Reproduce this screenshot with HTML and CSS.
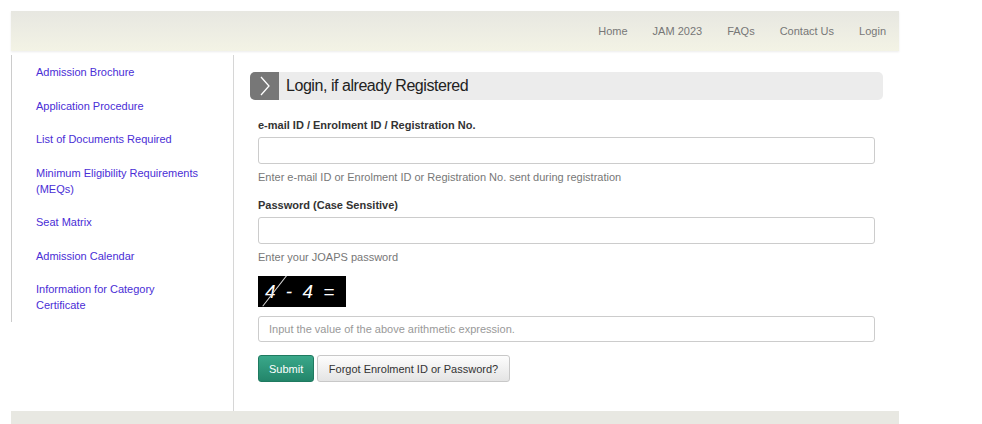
FILE: index.html
```html
<!DOCTYPE html>
<html lang="en">
  <head>
    <meta charset="UTF-8" />
    <meta name="viewport" content="width=device-width, initial-scale=1.0" />
    <title>JOAPS Login</title>
    <link rel="stylesheet" href="styles.css">
  </head>
  <body>
    <div class="page">
      <div class="topbar">
        <ul class="nav">
          <li><a href="#">Home</a></li>
          <li><a href="#">JAM 2023</a></li>
          <li><a href="#">FAQs</a></li>
          <li><a href="#">Contact Us</a></li>
          <li><a href="#">Login</a></li>
        </ul>
      </div>

      <div class="wrap">
        <div class="sidebar">
          <ul class="side-links">
            <li><a href="#">Admission Brochure</a></li>
            <li><a href="#">Application Procedure</a></li>
            <li><a href="#">List of Documents Required</a></li>
            <li><a href="#">Minimum Eligibility Requirements (MEQs)</a></li>
            <li><a href="#">Seat Matrix</a></li>
            <li><a href="#">Admission Calendar</a></li>
            <li><a href="#">Information for Category Certificate</a></li>
          </ul>
        </div>

        <div class="main">
          <div class="panel-title">
            <span class="panel-icon">
              <svg width="12" height="20" viewBox="0 0 12 20">
                <polyline points="2,1 10,10 2,19" fill="none" stroke="#fff" stroke-width="1.3" />
              </svg>
            </span>
            <h2>Login, if already Registered</h2>
          </div>

          <form class="login-form">
            <label for="uid">e-mail ID / Enrolment ID / Registration No.</label>
            <input type="text" id="uid" />
            <p class="help">Enter e-mail ID or Enrolment ID or Registration No. sent during registration</p>

            <label for="pwd" class="second">Password (Case Sensitive)</label>
            <input type="password" id="pwd" />
            <p class="help">Enter your JOAPS password</p>

            <div class="captcha">
              <span class="captcha-text">4 - 4 =</span>
              <span class="captcha-line"></span>
            </div>
            <input type="text" class="captcha-input" placeholder="Input the value of the above arithmetic expression." />

            <div class="actions">
              <button type="button" class="btn-submit">Submit</button>
              <button type="button" class="btn-forgot">Forgot Enrolment ID or Password?</button>
            </div>
          </form>
        </div>
      </div>

      <div class="footer"></div>
    </div>
  </body>
</html>
```

FILE: styles.css
```css
body {
  margin: 0;
  font-family: "Liberation Sans", Arial, sans-serif;
  font-size: 11px;
  color: #333;
  background: #fff;
}

.page {
  width: 888px;
  margin: 11px 0 0 11px;
}

.topbar {
  height: 40px;
  background: linear-gradient(#e7e7e1, #f3f3e5);
  box-shadow: 0 1px 2px rgba(0, 0, 0, 0.08);
  display: flex;
  justify-content: flex-end;
  align-items: center;
  padding-right: 13px;
}

.nav {
  list-style: none;
  margin: 0;
  padding: 0;
  display: flex;
  gap: 25px;
}

.nav a {
  color: #777;
  text-decoration: none;
  font-size: 11px;
}

.wrap {
  display: flex;
  margin-top: 4px;
}

.sidebar {
  width: 222px;
  flex-shrink: 0;
}

.side-links {
  list-style: none;
  margin: 0;
  padding: 0 30px 0 24px;
  border-left: 1px solid #ccc;
}

.side-links li {
  padding: 9px 0 8.5px;
  line-height: 16px;
}

.side-links a {
  color: #4a2ed6;
  text-decoration: none;
  font-size: 11px;
}

.main {
  flex: 1;
  border-left: 1px solid #d6d6d6;
  padding: 17px 16px 29px;
}

.panel-title {
  display: flex;
  align-items: center;
  height: 28px;
  background: #ececec;
  border-radius: 5px;
}

.panel-icon {
  width: 29px;
  height: 28px;
  background: #777;
  border-radius: 5px 0 0 5px;
  display: flex;
  align-items: center;
  justify-content: center;
}

.panel-title h2 {
  margin: 0 0 0 7px;
  font-size: 16px;
  font-weight: normal;
  letter-spacing: -0.45px;
  color: #222;
}

.login-form {
  margin: 18px 8px 0;
  display: flex;
  flex-direction: column;
  align-items: flex-start;
}

.login-form label {
  font-weight: bold;
  line-height: 14px;
  margin-bottom: 5px;
  color: #333;
}

.login-form label.second {
  margin-top: 14px;
}

.login-form input {
  width: 100%;
  box-sizing: border-box;
  height: 27px;
  border: 1px solid #ccc;
  border-radius: 3px;
  padding: 0 10px;
  font-family: inherit;
  font-size: 11px;
  margin: 0;
}

.login-form input::placeholder {
  color: #999;
}

.help {
  margin: 6px 0 0;
  line-height: 14px;
  color: #777;
}

.captcha {
  position: relative;
  margin-top: 12px;
  width: 88px;
  height: 31px;
  background: #000;
  overflow: hidden;
}

.captcha-text {
  display: block;
  padding-left: 7px;
  line-height: 32px;
  color: #fff;
  font-size: 19px;
  font-style: italic;
  letter-spacing: 2.5px;
  white-space: nowrap;
  font-family: "Liberation Sans", sans-serif;
}

.captcha-line {
  position: absolute;
  left: -3px;
  top: 14px;
  width: 40px;
  height: 1px;
  background: #ddd;
  transform: rotate(-52deg);
}

.login-form .captcha-input {
  margin-top: 9px;
  height: 26px;
}

.actions {
  display: flex;
  gap: 3px;
  margin-top: 13px;
}

.actions button {
  height: 27px;
  font-family: inherit;
  font-size: 11px;
  border-radius: 3px;
  padding: 0 10px;
  cursor: pointer;
}

.btn-submit {
  width: 56px;
  color: #fff;
  background: linear-gradient(#3aa88a, #23856a);
  border: 1px solid #1f7a60;
}

.btn-forgot {
  width: 193px;
  color: #333;
  background: linear-gradient(#fdfdfd, #e4e4e4);
  border: 1px solid #c8c8c8;
}

.footer {
  height: 20px;
  background: #e8e8e2;
}
```
